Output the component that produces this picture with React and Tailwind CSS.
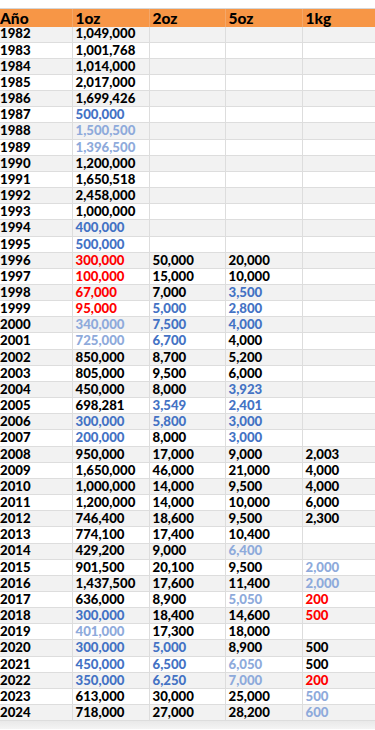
import React from "react";

// color codes: k black, b dark blue, l light blue, r red
const tone = {
  k: "text-black",
  b: "text-[#4472c4]",
  l: "text-[#8eaadb]",
  r: "text-[#ff0000]",
};

const rows = [
  ["1982", ["1,049,000"]],
  ["1983", ["1,001,768"]],
  ["1984", ["1,014,000"]],
  ["1985", ["2,017,000"]],
  ["1986", ["1,699,426"]],
  ["1987", ["500,000", "b"]],
  ["1988", ["1,500,500", "l"]],
  ["1989", ["1,396,500", "l"]],
  ["1990", ["1,200,000"]],
  ["1991", ["1,650,518"]],
  ["1992", ["2,458,000"]],
  ["1993", ["1,000,000"]],
  ["1994", ["400,000", "b"]],
  ["1995", ["500,000", "b"]],
  ["1996", ["300,000", "r"], ["50,000"], ["20,000"]],
  ["1997", ["100,000", "r"], ["15,000"], ["10,000"]],
  ["1998", ["67,000", "r"], ["7,000"], ["3,500", "b"]],
  ["1999", ["95,000", "r"], ["5,000", "b"], ["2,800", "b"]],
  ["2000", ["340,000", "l"], ["7,500", "b"], ["4,000", "b"]],
  ["2001", ["725,000", "l"], ["6,700", "b"], ["4,000"]],
  ["2002", ["850,000"], ["8,700"], ["5,200"]],
  ["2003", ["805,000"], ["9,500"], ["6,000"]],
  ["2004", ["450,000"], ["8,000"], ["3,923", "b"]],
  ["2005", ["698,281"], ["3,549", "b"], ["2,401", "b"]],
  ["2006", ["300,000", "b"], ["5,800", "b"], ["3,000", "b"]],
  ["2007", ["200,000", "b"], ["8,000"], ["3,000", "b"]],
  ["2008", ["950,000"], ["17,000"], ["9,000"], ["2,003"]],
  ["2009", ["1,650,000"], ["46,000"], ["21,000"], ["4,000"]],
  ["2010", ["1,000,000"], ["14,000"], ["9,500"], ["4,000"]],
  ["2011", ["1,200,000"], ["14,000"], ["10,000"], ["6,000"]],
  ["2012", ["746,400"], ["18,600"], ["9,500"], ["2,300"]],
  ["2013", ["774,100"], ["17,400"], ["10,400"]],
  ["2014", ["429,200"], ["9,000"], ["6,400", "l"]],
  ["2015", ["901,500"], ["20,100"], ["9,500"], ["2,000", "l"]],
  ["2016", ["1,437,500"], ["17,600"], ["11,400"], ["2,000", "l"]],
  ["2017", ["636,000"], ["8,900"], ["5,050", "l"], ["200", "r"]],
  ["2018", ["300,000", "b"], ["18,400"], ["14,600"], ["500", "r"]],
  ["2019", ["401,000", "l"], ["17,300"], ["18,000"]],
  ["2020", ["300,000", "b"], ["5,000", "b"], ["8,900"], ["500"]],
  ["2021", ["450,000", "b"], ["6,500", "b"], ["6,050", "l"], ["500"]],
  ["2022", ["350,000", "b"], ["6,250", "b"], ["7,000", "l"], ["200", "r"]],
  ["2023", ["613,000"], ["30,000"], ["25,000"], ["500", "l"]],
  ["2024", ["718,000"], ["27,000"], ["28,200"], ["600", "l"]],
];

const cols = "grid grid-cols-[72px_77px_76px_77px_73px]";

function Row({ year, cells, index }) {
  const shade = index % 2 === 0 ? "bg-[#f2f2f2]" : "bg-white";
  const padded = [0, 1, 2, 3].map((i) => cells[i] || null);
  return (
    <div className={`${cols} h-[16.17px] ${shade} border-b border-[#dddddd]`}>
      <div className="flex items-center text-black">{year}</div>
      {padded.map((c, i) => (
        <div key={i} className="flex items-center border-l border-[#dddddd] pl-[2.5px]">
          {c && <span className={tone[c[1] || "k"]}>{c[0]}</span>}
        </div>
      ))}
    </div>
  );
}

export default function App() {
  return (
    <div className="w-[375px] h-[730px] overflow-hidden bg-white font-['Lato',sans-serif] font-black">
      <div className="h-[9px] bg-white border-b border-[#d6d6d6]" />
      <div className={`${cols} h-[17.5px] bg-[#f79646] overflow-hidden text-[15.5px] leading-[17.5px] text-black`}>
        {["Año", "1oz", "2oz", "5oz", "1kg"].map((h, i) => (
          <div key={h} className={`pt-[1px] ${i ? "border-l border-[#f4a76a] pl-[2.5px]" : ""}`}>
            {h}
          </div>
        ))}
      </div>
      <div className="text-[13.2px] leading-none">
        {rows.map(([year, ...cells], i) => (
          <Row key={year} year={year} cells={cells} index={i} />
        ))}
      </div>
      <div className="h-[8px] bg-gradient-to-b from-[#e9e9e9] to-[#f4f4f4]" />
    </div>
  );
}
